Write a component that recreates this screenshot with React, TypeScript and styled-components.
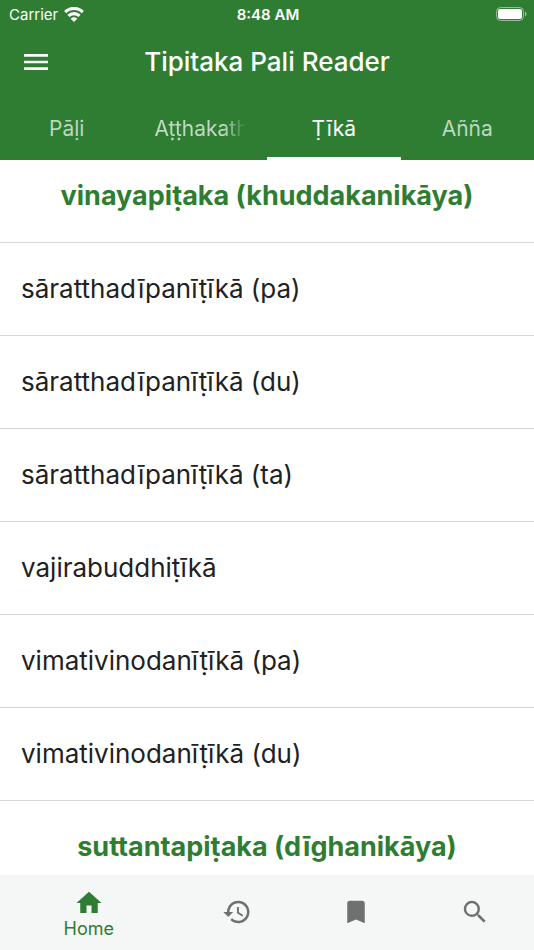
import React, { useLayoutEffect, useRef, useState } from "react";
import styled, { createGlobalStyle } from "styled-components";

const green = "#2e7d32";

const GlobalStyle = createGlobalStyle`
  * { box-sizing: border-box; }
  html, body, #root { height: 100%; }
  body { margin: 0; background: #fff; font-family: Inter, "Noto Sans", sans-serif; color: #212121; }
  button { font: inherit; border: 0; background: none; padding: 0; cursor: pointer; }
  h1, h2, ul { margin: 0; padding: 0; }
`;

const Screen = styled.div`
  display: flex;
  flex-direction: column;
  height: 100vh;
`;

const Header = styled.header`
  flex: none;
  background: ${green};
  color: #fff;
`;

const StatusBar = styled.div`
  display: grid;
  grid-template-columns: 1fr auto 1fr;
  align-items: center;
  height: 28px;
  padding: 0 7px 0 9px;
  font-size: 15px;
`;

const Carrier = styled.span`
  display: flex;
  align-items: center;
  gap: 6px;
`;

const Clock = styled.span`
  font-weight: 600;
`;

const Battery = styled.svg`
  justify-self: end;
`;

const AppBar = styled.div`
  display: grid;
  grid-template-columns: 72px 1fr 72px;
  align-items: center;
  height: 68px;
`;

const MenuButton = styled.button`
  display: flex;
  align-items: center;
  justify-content: center;
  height: 48px;
  color: #fff;
`;

const Title = styled.h1`
  font-size: 26px;
  font-weight: 500;
  line-height: 32px;
  text-align: center;
  white-space: nowrap;
`;

const Tabs = styled.nav`
  display: grid;
  grid-template-columns: repeat(4, minmax(0, 1fr));
  height: 64px;
`;

const Tab = styled.button<{ $active: boolean }>`
  && {
    padding: 5px 21px 0;
    border-bottom: 3px solid ${(p) => (p.$active ? "#fff" : "transparent")};
    color: ${(p) => (p.$active ? "#fff" : "rgba(255, 255, 255, 0.7)")};
    font-size: 21px;
  }
`;

const TabLabel = styled.span<{ $fade?: boolean }>`
  display: block;
  overflow: hidden;
  white-space: nowrap;
  line-height: 32px;
  mask-image: ${(p) => (p.$fade ? "linear-gradient(to right, #000 75%, transparent)" : "none")};
`;

const Content = styled.main`
  flex: 1;
  min-height: 0;
  overflow-y: auto;
  scrollbar-width: none;
`;

const Category = styled.h2`
  display: flex;
  align-items: center;
  justify-content: center;
  height: 93px;
  padding-bottom: 1px;
  border-bottom: 1px solid #d6d6d6;
  color: ${green};
  font-size: 27px;
  font-weight: 700;
  white-space: nowrap;
`;

const BookList = styled.ul`
  list-style: none;
`;

const Book = styled.li`
  height: 93px;
  border-bottom: 1px solid #d6d6d6;
`;

const BookButton = styled.button`
  && {
    display: flex;
    align-items: center;
    width: 100%;
    height: 100%;
    padding: 0 21px 2px;
    color: #212121;
    font-size: 26px;
    text-align: left;
  }
`;

const BottomBar = styled.nav`
  flex: none;
  display: grid;
  grid-template-columns: 178fr repeat(3, 119fr);
  height: 75px;
  background: #f5f7f6;
`;

const NavButton = styled.button<{ $active?: boolean }>`
  && {
    display: flex;
    flex-direction: column;
    align-items: center;
    justify-content: center;
    padding: ${(p) => (p.$active ? "3px 0 0" : "0 0 2px")};
    color: ${(p) => (p.$active ? green : "#6f7170")};
    font-size: 18px;
    line-height: 22px;
  }
`;

const icons: Record<string, string> = {
  home: "M10 20v-6h4v6h5v-8h3L12 3 2 12h3v8z",
  history: "M13 3a9 9 0 0 0-9 9H1l3.89 3.89.07.14L9 12H6a7 7 0 1 1 2.06 4.94l-1.42 1.42A9 9 0 1 0 13 3zm-1 5v5l4.28 2.54.72-1.21-3.5-2.08V8z",
  bookmark: "M17 3H7c-1.1 0-2 .9-2 2v16l7-3 7 3V5c0-1.1-.9-2-2-2z",
  search: "M15.5 14h-.79l-.28-.27A6.471 6.471 0 0 0 16 9.5 6.5 6.5 0 1 0 9.5 16c1.61 0 3.09-.59 4.23-1.57l.27.28v.79l5 4.99L20.49 19l-4.99-5zm-6 0C7.01 14 5 11.99 5 9.5S7.01 5 9.5 5 14 7.01 14 9.5 11.99 14 9.5 14z",
  menu: "M3 18h18v-2H3v2zm0-5h18v-2H3v2zm0-7v2h18V6H3z",
};

const Icon = ({ name, size = 30 }: { name: string; size?: number }) => (
  <svg width={size} height={size} viewBox="0 0 24 24" fill="currentColor" aria-hidden="true">
    <path d={icons[name]} />
  </svg>
);

const tabs = ["Pāḷi", "Aṭṭhakathā", "Ṭīkā", "Añña"];

const books = [
  "sāratthadīpanīṭīkā (pa)",
  "sāratthadīpanīṭīkā (du)",
  "sāratthadīpanīṭīkā (ta)",
  "vajirabuddhiṭīkā",
  "vimativinodanīṭīkā (pa)",
  "vimativinodanīṭīkā (du)",
];

export default function App() {
  const [active, setActive] = useState(2);
  const content = useRef<HTMLElement>(null);

  // The list opens slightly scrolled.
  useLayoutEffect(() => {
    if (content.current) content.current.scrollTop = 10;
  }, []);

  return (
    <Screen>
      <GlobalStyle />
      <Header>
        <StatusBar>
          <Carrier>
            Carrier
            <svg width="20" height="15" viewBox="0 0 20 15" fill="none" stroke="#fff" strokeWidth="3.1" aria-hidden="true">
              <path d="M1.2 5.1a12.6 12.6 0 0 1 17.6 0M4.5 8.9a7.8 7.8 0 0 1 11 0" />
              <path d="M6.700 11.700a4.700 4.700 0 0 1 6.600 0L10 15z" fill="#fff" stroke="none" />
            </svg>
          </Carrier>
          <Clock>8:48 AM</Clock>
          <Battery width="31" height="14" viewBox="0 0 31 14" aria-hidden="true">
            <rect x=".5" y=".5" width="27" height="13" rx="4" fill="none" stroke="#fff" strokeOpacity=".5" />
            <rect x="2" y="2" width="24" height="10" rx="2" fill="#fff" />
            <path d="M29 4.500c2 .7 2 4.300 0 5z" fill="#fff" fillOpacity=".5" />
          </Battery>
        </StatusBar>
        <AppBar>
          <MenuButton aria-label="Open menu"><Icon name="menu" size={32} /></MenuButton>
          <Title>Tipitaka Pali Reader</Title>
        </AppBar>
        <Tabs role="tablist">
          {tabs.map((t, i) => (
            <Tab key={t} role="tab" aria-selected={i === active} $active={i === active} onClick={() => setActive(i)}>
              <TabLabel $fade={i === 1}>{t}</TabLabel>
            </Tab>
          ))}
        </Tabs>
      </Header>
      <Content ref={content}>
        <Category>vinayapiṭaka (khuddakanikāya)</Category>
        <BookList>
          {books.map((b) => (
            <Book key={b}><BookButton>{b}</BookButton></Book>
          ))}
        </BookList>
        <Category>suttantapiṭaka (dīghanikāya)</Category>
      </Content>
      <BottomBar>
        <NavButton $active><Icon name="home" />Home</NavButton>
        <NavButton aria-label="History"><Icon name="history" /></NavButton>
        <NavButton aria-label="Bookmarks"><Icon name="bookmark" /></NavButton>
        <NavButton aria-label="Search"><Icon name="search" /></NavButton>
      </BottomBar>
    </Screen>
  );
}
